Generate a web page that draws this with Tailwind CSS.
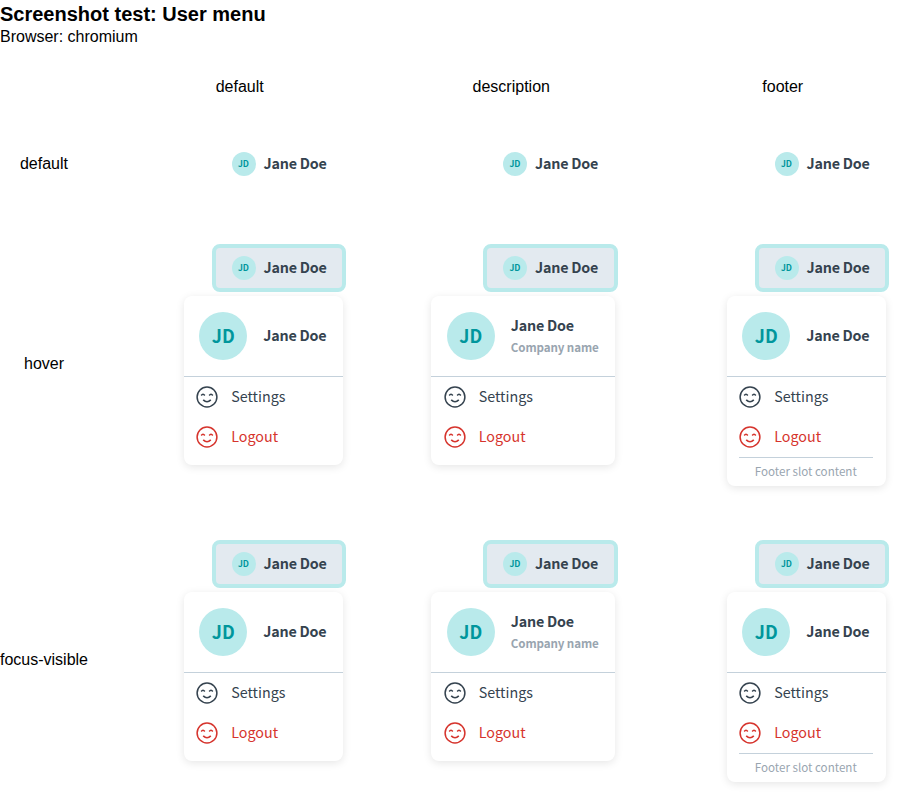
<!DOCTYPE html>
<html lang="en">
<head>
<meta charset="utf-8">
<title>User menu</title>
<script src="https://cdn.jsdelivr.net/npm/@tailwindcss/browser@4"></script>
</head>
<body class="bg-white text-black font-['Liberation_Sans',sans-serif] text-base overflow-hidden">
<svg class="hidden"><symbol id="emoji" viewBox="0 0 24 24"><g fill="none" stroke="currentColor"><circle cx="12" cy="12" r="9.9" stroke-width="1.5"/><path d="M6.2 10.5Q8 8.1 9.8 10.5M14.2 10.5Q16 8.1 17.8 10.5" stroke-width="1.5"/><path d="M8.2 14.9Q12 18.7 15.8 14.9" stroke-width="1.6"/></g></symbol></svg>
<header class="h-[46px]">
<h1 class="text-xl leading-7 font-bold">Screenshot test: User menu</h1>
<p class="leading-[18px]">Browser: chromium</p>
</header>
<main id="matrix" class="grid w-[919px] grid-cols-[104.25px_271.5px_271.5px_271.5px] grid-rows-[82px_72px_16px_296px_296px]"></main>
<script>
const trigger = (active) => `
<div class="flex h-12 w-[134.25px] items-center rounded-lg border-4 pl-[15.75px] ${active ? 'border-[#b9eaeb] bg-[#e3eaf0]' : 'border-transparent'}">
  <span class="flex size-6 items-center justify-center rounded-full bg-[#b9eaeb] pb-px text-[8.6px] leading-none font-bold text-[#00969c] font-['Noto_Sans_CJK_SC',sans-serif]">JD</span>
  <span class="ml-2 pb-0.5 whitespace-nowrap text-[14.3px] leading-6 font-bold tracking-[-0.2px] text-[#35434f] font-['Noto_Sans_CJK_SC',sans-serif]">Jane Doe</span>
</div>`;
const item = (label, color, pad) => `
<div class="flex h-10 items-center ${pad} ${color}">
  <svg class="size-6"><use href="#emoji"/></svg>
  <span class="ml-3 pb-0.5 text-[14.3px] leading-6 font-['Noto_Sans_CJK_SC',sans-serif]">${label}</span>
</div>`;
const card = (kind) => {
  const wide = kind === 'description';
  const pad = wide ? 'pl-3' : 'pl-[11.5px]';
  return `
<div class="mt-1 mr-[2.75px] rounded-lg bg-white shadow-[0_2px_8px_rgba(0,0,0,0.1)] ${wide ? 'w-[184px]' : 'w-[159.5px]'} ${kind === 'footer' ? 'h-[190px]' : 'h-[169px]'}">
  <div class="flex h-[81px] items-center border-b border-[#c4d1db] ${wide ? 'pl-4' : 'pl-[15.5px]'}">
    <span class="flex size-12 items-center justify-center rounded-full bg-[#b9eaeb] pb-px text-[17.9px] leading-none font-bold text-[#00969c] font-['Noto_Sans_CJK_SC',sans-serif]">JD</span>
    <div class="ml-4 pb-0.5 whitespace-nowrap font-bold text-[#35434f] font-['Noto_Sans_CJK_SC',sans-serif]">
      <div class="text-[14.3px] leading-6 tracking-[-0.2px]">Jane Doe</div>
      ${wide ? '<div class="text-[11.6px] leading-5 tracking-[-0.1px] text-[#99a5b0]">Company name</div>' : ''}
    </div>
  </div>
  ${item('Settings', 'text-[#35434f]', pad)}
  ${item('Logout', 'text-[#d6342d]', pad)}
  ${kind === 'footer' ? `<div class="mr-[13px] ml-[12.5px] border-t border-[#c4d1db] pr-px text-center text-[11.6px] leading-[26px] whitespace-nowrap text-[#99a5b0] font-['Noto_Sans_CJK_SC',sans-serif]">Footer slot content</div>` : ''}
</div>`;
};
const kinds = ['default', 'description', 'footer'];
let html = '<div></div>';
for (const k of kinds) html += `<div class="flex items-center justify-center pr-[0.5px] leading-6">${k}</div>`;
html += '<div class="flex w-[88px] items-center justify-center">default</div>';
for (const k of kinds) html += `<div class="flex items-center justify-end pr-[29.75px]">${trigger(false)}</div>`;
html += '<div class="col-span-4"></div>';
for (const state of ['hover', 'focus-visible']) {
  html += `<div class="flex w-[88px] items-center justify-center whitespace-nowrap">${state}</div>`;
  for (const k of kinds) html += `<div class="flex flex-col items-end pt-7 pr-[29.75px]">${trigger(true)}${card(k)}</div>`;
}
document.getElementById('matrix').innerHTML = html;
</script>
</body>
</html>
